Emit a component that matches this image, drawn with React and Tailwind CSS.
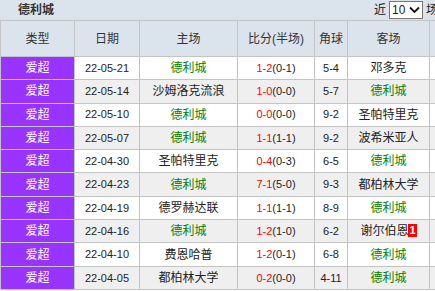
import React from "react";

const rows = [
  ["22-05-21", "德利城", "1-2", "(0-1)", "5-4", "邓多克"],
  ["22-05-14", "沙姆洛克流浪", "1-0", "(0-0)", "5-7", "德利城"],
  ["22-05-10", "德利城", "0-0", "(0-0)", "9-2", "圣帕特里克"],
  ["22-05-07", "德利城", "1-1", "(1-1)", "9-2", "波希米亚人"],
  ["22-04-30", "圣帕特里克", "0-4", "(0-3)", "6-5", "德利城"],
  ["22-04-23", "德利城", "7-1", "(5-0)", "9-3", "都柏林大学"],
  ["22-04-19", "德罗赫达联", "1-1", "(1-1)", "8-9", "德利城"],
  ["22-04-16", "德利城", "1-2", "(1-0)", "6-2", "谢尔伯恩", true],
  ["22-04-10", "费恩哈普", "1-2", "(0-1)", "6-8", "德利城"],
  ["22-04-05", "都柏林大学", "0-2", "(0-0)", "4-11", "德利城"],
];

function Team({ name, badge }) {
  const green = name === "德利城";
  return (
    <span className={green ? "text-[#008000]" : "text-[#222]"}>
      {name}
      {badge && (
        <span className="inline-block bg-[#ff0000] text-white text-[11px] leading-[13px] px-[1px] align-[1px] font-bold">1</span>
      )}
    </span>
  );
}

export default function App() {
  const td = "border border-[#c4c4c4] text-center p-0 whitespace-nowrap";
  return (
    <div
      className="w-[435px] h-[291px] overflow-hidden bg-white text-[12px] text-[#222]"
      style={{ fontFamily: '"Liberation Sans", "Noto Sans CJK SC", sans-serif' }}
    >
      <div className="h-[20px] bg-[#dbe3ec] flex items-center justify-between">
        <span className="ml-[18px] font-bold text-[12px] text-[#333]">德利城</span>
        <div className="flex items-center -mr-[3px]">
          <span className="mr-[3px]">近</span>
          <span className="w-[34px] h-[18px] border border-[#767676] bg-white flex items-center justify-between pl-[2px] pr-[2px] text-[12px]">
            10
            <svg width="11" height="8" viewBox="0 0 11 8">
              <path d="M1 1.5 L5.5 6 L10 1.5" fill="none" stroke="#111" strokeWidth="1.8" />
            </svg>
          </span>
          <span className="ml-[3px]">场</span>
        </div>
      </div>
      <table className="border-collapse table-fixed w-[500px]">
        <colgroup>
          <col className="w-[74px]" />
          <col className="w-[65px]" />
          <col className="w-[98px]" />
          <col className="w-[77px]" />
          <col className="w-[33px]" />
          <col className="w-[82px]" />
          <col className="w-[71px]" />
        </colgroup>
        <thead>
          <tr className="h-[36px] bg-[#dbe3ec]">
            {["类型", "日期", "主场", "比分(半场)", "角球", "客场", ""].map((h, i) => (
              <th key={i} className={td + " font-normal text-[#333]"}>{h}</th>
            ))}
          </tr>
        </thead>
        <tbody>
          {rows.map((r, i) => (
            <tr key={i} className={"h-[23.3px] " + (i % 2 === 1 ? "bg-[#efefef]" : "bg-white")}>
              <td className={td + " bg-[#9933ff] text-white"}>爱超</td>
              <td className={td + " text-[11px]"}>{r[0]}</td>
              <td className={td}><Team name={r[1]} /></td>
              <td className={td + " text-[11px]"}>
                <span className="text-[#ff0000]">{r[2]}</span>
                <span>{r[3]}</span>
              </td>
              <td className={td + " text-[11px]"}>{r[4]}</td>
              <td className={td}><Team name={r[5]} badge={r[6]} /></td>
              <td className={td}></td>
            </tr>
          ))}
        </tbody>
      </table>
    </div>
  );
}
